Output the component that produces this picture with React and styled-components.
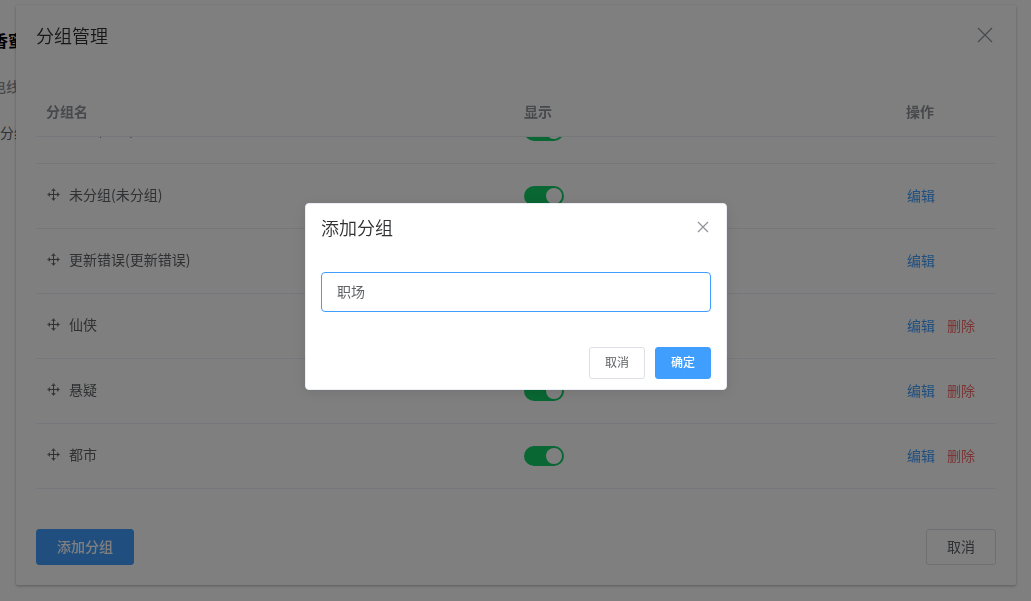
import React, { useState } from "react";
import styled, { createGlobalStyle } from "styled-components";

const GlobalStyle = createGlobalStyle`
  * {
    box-sizing: border-box;
  }
  body {
    margin: 0;
    background: #fff;
    color: #606266;
    font-family: "Noto Sans CJK SC", sans-serif;
    font-size: 14px;
  }
  button, input {
    font-family: inherit;
    margin: 0;
  }
`;

const BookPage = styled.main`
  height: 100vh;
  overflow: hidden;
  padding-top: 28px;
  white-space: nowrap;
  .book__title {
    margin: 0 0 24px -8px;
    font-size: 16px;
    font-weight: 700;
    line-height: 24px;
    color: #000;
  }
  .book__column {
    margin: 0 0 26px -8px;
    font-weight: 500;
    line-height: 20px;
    color: #909399;
  }
  .book__group {
    margin: 0 0 0 -14px;
    line-height: 20px;
  }
`;

const DialogLayer = styled.div`
  position: fixed;
  inset: 0;
  padding: 5px 15px 16px 16px;
`;

const Dialog = styled.section`
  background: #fff;
  border-radius: 2px;
  box-shadow: 0 1px 3px rgba(0, 0, 0, 0.3);
`;

const DialogHeader = styled.header`
  display: flex;
  align-items: center;
  justify-content: space-between;
  padding: 18px 21px 12px 20px;
`;

const Title = styled.h2`
  margin: 0;
  font-size: 18px;
  font-weight: 350;
  line-height: ${(props) => (props.$compact ? "18px" : "24px")};
  color: #303133;
`;

const CloseButton = styled.button`
  display: flex;
  padding: 0;
  border: 0;
  background: none;
  color: #909399;
  cursor: pointer;
`;

const DialogBody = styled.div`
  padding: 30px 20px;
`;

const DialogFooter = styled.footer`
  display: flex;
  justify-content: space-between;
  padding: 10px 20px 20px;
`;

const Table = styled.table`
  width: 100%;
  flex: none;
  table-layout: fixed;
  border-collapse: separate;
  border-spacing: 0;
  text-align: left;
  th,
  td {
    padding: 0 10px;
    border-bottom: 1px solid #ebeef5;
  }
  th {
    height: 48px;
    padding-bottom: 4px;
    font-weight: 700;
    color: #909399;
  }
  td {
    height: 65px;
  }
  .col__name {
    width: 49.8%;
  }
  .col__action {
    width: 100px;
  }
`;

/* the list is scrolled to its end */
const TableScroll = styled.div`
  display: flex;
  flex-direction: column;
  justify-content: flex-end;
  height: 352px;
  overflow: hidden;
`;

const GroupName = styled.div`
  display: flex;
  align-items: center;
  gap: 9px;
  padding-bottom: 5px;
  svg {
    flex: none;
    margin-top: 2px;
  }
`;

const Switch = styled.input`
  appearance: none;
  display: block;
  width: 40px;
  height: 20px;
  margin: 0;
  padding: 2px;
  border-radius: 10px;
  background: #dcdfe6;
  cursor: pointer;
  &::before {
    content: "";
    display: block;
    width: 16px;
    height: 16px;
    border-radius: 50%;
    background: #fff;
  }
  &:checked {
    background: #13ce66;
  }
  &:checked::before {
    margin-left: 20px;
  }
`;

const Actions = styled.div`
  display: flex;
  gap: 10px;
  margin-right: -10px;
  padding-bottom: 3px;
`;

const TextButton = styled.button`
  padding: 0;
  border: 1px solid transparent;
  background: none;
  font-size: 14px;
  font-weight: 400;
  line-height: 20px;
  color: ${(props) => (props.$danger ? "#f56c6c" : "#409eff")};
  cursor: pointer;
`;

const Button = styled.button`
  height: ${(props) => (props.$small ? "32px" : "36px")};
  padding: 0 ${(props) => (props.$small ? "15px" : "20px")} 2px;
  border: 1px solid ${(props) => (props.$primary ? "#409eff" : "#dcdfe6")};
  border-radius: 3px;
  background: ${(props) => (props.$primary ? "#409eff" : "#fff")};
  font-size: ${(props) => (props.$small ? "12px" : "14px")};
  font-weight: ${(props) => (props.$primary ? 500 : 400)};
  line-height: 1;
  color: ${(props) => (props.$primary ? "#fff" : "#606266")};
  cursor: pointer;
`;

const Mask = styled.div`
  position: fixed;
  inset: 0;
  display: flex;
  align-items: center;
  justify-content: center;
  padding: 0 0 8px 1px;
  background: rgba(0, 0, 0, 0.5);
`;

const MessageBox = styled.form`
  width: 422px;
  max-width: 100%;
  border: 1px solid #ebeef5;
  border-radius: 4px;
  background: #fff;
  box-shadow: 0 2px 12px rgba(0, 0, 0, 0.1);
`;

const BoxHeader = styled.header`
  display: flex;
  align-items: center;
  justify-content: space-between;
  padding: 14px 15px 11px;
`;

const BoxBody = styled.div`
  padding: 25px 15px 30px;
`;

const TextInput = styled.input`
  display: block;
  width: 100%;
  height: 40px;
  padding: 0 15px 2px;
  border: 1px solid #409eff;
  border-radius: 4px;
  outline: none;
  font-size: 14px;
  color: #606266;
`;

const BoxFooter = styled.footer`
  display: flex;
  justify-content: flex-end;
  gap: 10px;
  padding: 5px 15px 10px;
`;

const CloseIcon = ({ size }) => (
  <svg width={size} height={size} viewBox={`0 0 ${size} ${size}`} fill="none" stroke="currentColor">
    <path
      d={`M3 3L${size - 3} ${size - 3}M${size - 3} 3L3 ${size - 3}`}
      strokeWidth="1.2"
    />
  </svg>
);

const DragIcon = () => (
  <svg width="14" height="14" viewBox="-1 0 14 14" fill="#606266" stroke="#606266">
    <path d="M6.5 2V12M2 6.5H12" />
    <path
      d="M6.5 0L9 3H4ZM6.5 13L9 10H4ZM0 6.5L3 4V9ZM13 6.5L10 4V9Z"
      stroke="none"
      fillOpacity="0.75"
    />
  </svg>
);

const Columns = () => (
  <colgroup>
    <col className="col__name" />
    <col />
    <col className="col__action" />
  </colgroup>
);

const initialGroups = [
  { name: "全部(全部)", show: true, actions: [] },
  { name: "未分组(未分组)", show: true, actions: ["编辑"] },
  { name: "更新错误(更新错误)", show: true, actions: ["编辑"] },
  { name: "仙侠", show: true, actions: ["编辑", "删除"] },
  { name: "悬疑", show: true, actions: ["编辑", "删除"] },
  { name: "都市", show: true, actions: ["编辑", "删除"] },
];

export default function App() {
  const [groups, setGroups] = useState(initialGroups);
  const [groupName, setGroupName] = useState("职场");

  const toggleGroup = (name) => {
    setGroups(
      groups.map((group) =>
        group.name === name ? { ...group, show: !group.show } : group
      )
    );
  };

  return (
    <>
      <GlobalStyle />
      <BookPage>
        <h1 className="book__title">香蜜</h1>
        <p className="book__column">电线</p>
        <p className="book__group">未分组</p>
      </BookPage>

      <DialogLayer>
        <Dialog>
          <DialogHeader>
            <Title>分组管理</Title>
            <CloseButton type="button" aria-label="关闭">
              <CloseIcon size={20} />
            </CloseButton>
          </DialogHeader>
          <DialogBody>
            <Table>
              <Columns />
              <thead>
                <tr>
                  <th>分组名</th>
                  <th>显示</th>
                  <th>操作</th>
                </tr>
              </thead>
            </Table>
            <TableScroll>
              <Table>
                <Columns />
                <tbody>
                  {groups.map((group) => (
                    <tr key={group.name}>
                      <td>
                        <GroupName>
                          <DragIcon />
                          <span>{group.name}</span>
                        </GroupName>
                      </td>
                      <td>
                        <Switch
                          type="checkbox"
                          role="switch"
                          aria-label={group.name}
                          checked={group.show}
                          onChange={() => toggleGroup(group.name)}
                        />
                      </td>
                      <td>
                        <Actions>
                          {group.actions.map((action) => (
                            <TextButton
                              key={action}
                              type="button"
                              $danger={action === "删除"}
                            >
                              {action}
                            </TextButton>
                          ))}
                        </Actions>
                      </td>
                    </tr>
                  ))}
                </tbody>
              </Table>
            </TableScroll>
          </DialogBody>
          <DialogFooter>
            <Button type="button" $primary>
              添加分组
            </Button>
            <Button type="button">取消</Button>
          </DialogFooter>
        </Dialog>
      </DialogLayer>

      <Mask>
        <MessageBox onSubmit={(e) => e.preventDefault()}>
          <BoxHeader>
            <Title $compact>添加分组</Title>
            <CloseButton type="button" aria-label="关闭">
              <CloseIcon size={16} />
            </CloseButton>
          </BoxHeader>
          <BoxBody>
            <TextInput
              type="text"
              aria-label="添加分组"
              value={groupName}
              onChange={(e) => setGroupName(e.target.value)}
            />
          </BoxBody>
          <BoxFooter>
            <Button type="button" $small>
              取消
            </Button>
            <Button type="submit" $small $primary>
              确定
            </Button>
          </BoxFooter>
        </MessageBox>
      </Mask>
    </>
  );
}
